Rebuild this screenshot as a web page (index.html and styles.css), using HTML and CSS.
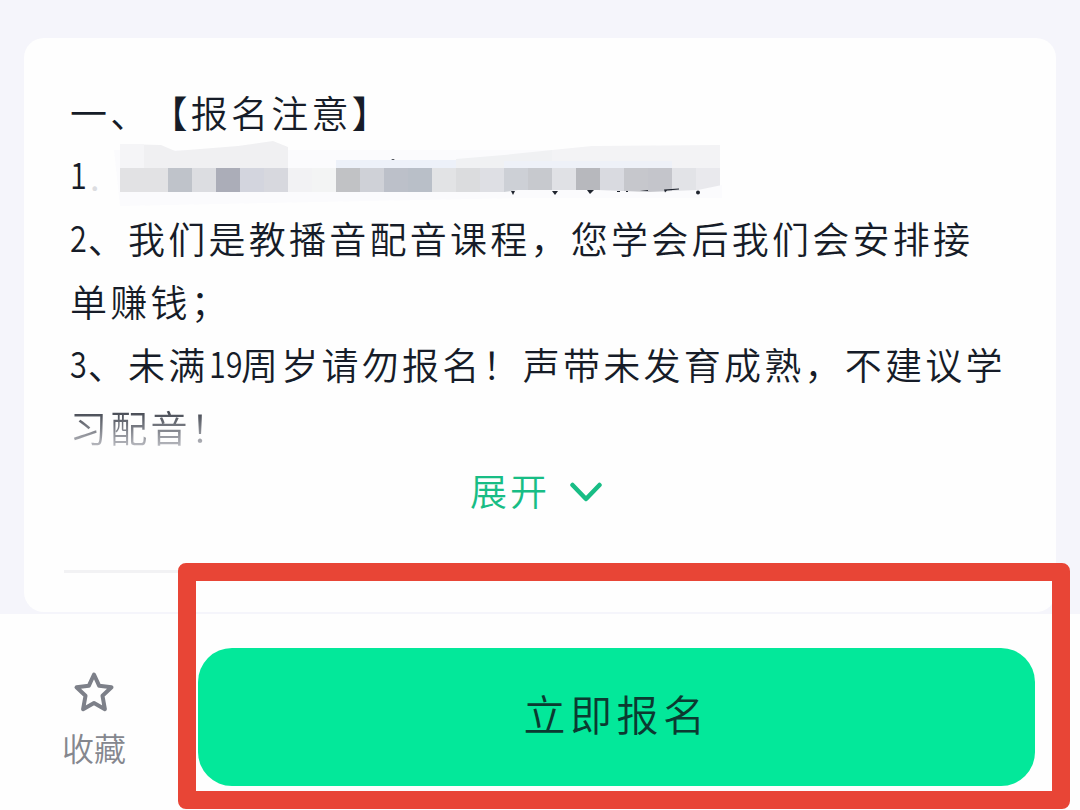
FILE: index.html
```html
<!DOCTYPE html>
<html lang="zh-CN">
<head>
  <meta charset="UTF-8" />
  <title>报名注意</title>
  <link rel="stylesheet" href="styles.css">
</head>
<body>
  <main class="page">
    <section class="card">
      <div class="notice">
        <p>一、【报名注意】</p>
        <p class="hidden-line"><span class="num">1</span><span class="faint">.</span>
          <!-- mosaic over the first item -->
          <svg class="mosaic" width="610" height="63" viewBox="114 144 610 63">
            <path fill="#fbfbfd" d="M114 150h606v44l-300 6-300 6z"/>
            <path fill="#f0f0f2" d="M120 144l41 1 14 6 63-5 35-5 15 6v21H120z"/>
            <path fill="#f5f5f7" d="M120 144h24v24h-24z"/>
            <path fill="#edf1f9" d="M336 160h168v8H336z"/>
            <path fill="#f0f1f3" d="M456 159l48-4 48-5v18h-96z"/>
            <path fill="#f3f3f5" d="M552 150l40-4 128-1v23H552z"/>
            <path fill="#eef1f8" d="M504 161h168v7H504z"/>
            <g id="tiles"></g>
            <path fill="#fbfbfd" d="M504 192l14-2 80 0 50 2 50-2 24-5v13H504z"/>
            <path fill="#20252f" d="M511 191h4l-2 4zM552 191h6l-3 4zM587 190h7l-4 4zM617 191h3v1h-3zM626 191h2v1h-2zM640 191l8-1v1zM664 189.500l15-1v1l-12 1-2 2z"/>
            <circle cx="698" cy="192.500" r="2" fill="#20252f"/>
            <path fill="#20252f" d="M391 160l2-1 2 1z"/>
          </svg>
        </p>
        <p><span class="num">2</span>、我们是教播音配音课程，您学会后我们会安排接</p>
        <p>单赚钱；</p>
        <p><span class="num">3</span>、未满<span class="num pair">19</span>周岁请勿报名！声带未发育成熟，不建议学</p>
        <p class="fade">习配音！</p>
      </div>
      <button class="expand">
        <span>展开</span>
        <svg width="32" height="20" viewBox="0 0 32 20">
          <path d="M2.500 3L16 17 29.500 3" />
        </svg>
      </button>
      <hr class="divider">
    </section>

    <footer class="bar">
      <button class="fav">
        <svg width="42" height="42" viewBox="0 0 42 42">
          <path d="M21 3.500l5.200 11.300 12.300 1.500-9 8.500 2.400 13.400L21 32.100 10.100 38.200l2.400-13.400-9-8.500 12.300-1.500z" />
        </svg>
        <span>收藏</span>
      </button>
      <button class="enroll"><span>立即报名</span></button>
    </footer>

    <div class="highlight"></div>
  </main>

  <script>
    const colors = [
      "#e2e2e4", "#e2e2e4", "#bfc3ca", "#dcdde1", "#abadb8", "#d3d5de", "#d7d8de",
      "#f2f2f4", "#f3f4f4", "#c1c2c5", "#cfd1d7", "#bcc0c9", "#b9bfc8", "#e2e3e5",
      "#dbdcde", "#dedfe4", "#cdd0d6", "#c7c9ce", "#e0e1e5", "#b7b8bd", "#d9dae0",
      "#c6c7cc", "#c4c5cb", "#e2e3e7", "#e9e9ed"
    ];
    document.getElementById("tiles").innerHTML = colors
      .map((c, i) => `<rect x="${120 + i * 24}" y="168" width="24" height="24" fill="${c}"/>`)
      .join("");
  </script>
</body>
</html>
```
FILE: styles.css
```css
* { box-sizing: border-box; margin: 0; padding: 0; }
body {
  background: #f5f5fb;
  font-family: "Noto Sans CJK SC", sans-serif;
  font-weight: 350;
  color: #161c28;
}
button {
  border: none;
  background: none;
  font: inherit;
  color: inherit;
  cursor: pointer;
}
.page {
  position: relative;
  width: 1080px; height: 810px;
  padding-top: 38px;
  display: flex; flex-direction: column;
  overflow: hidden;
}
.card {
  height: 574px;
  margin: 0 24px 2px;
  padding: 43px 40px 0 46px;
  border-radius: 20px;
  background: #fefefe;
}
.notice {
  font-size: 37px;
  line-height: 63px;
  letter-spacing: 3.250px;
  white-space: nowrap;
  text-spacing-trim: space-all;
}
.notice p { height: 63px; }
.num {
  display: inline-block;
  margin-right: -2px;
  font-size: 36px;
  letter-spacing: 0;
  transform: translateY(-2px) scaleX(0.85);
  transform-origin: left;
}
.pair { margin-right: -7px; }
.hidden-line { display: flex; }
.faint {
  width: 27px;
  padding-left: 2px;
  color: #dcdde1;
}
.mosaic {
  flex: none;
  margin-left: -1px;
  overflow: visible;
}
.fade {
  width: 200px;
  color: transparent;
  background: linear-gradient(#30353f 15%, #b9bac0 80%);
  -webkit-background-clip: text;
  background-clip: text;
}
.expand {
  display: flex; align-items: center;
  gap: 20px;
  margin: 5px 0 0 400px;
  height: 56px;
  font-size: 37px;
  letter-spacing: 3px;
  color: #18bd85;
}
.expand span { padding-bottom: 5px; }
.expand svg {
  fill: none; stroke: #18bd85; stroke-width: 4.500;
  stroke-linecap: round; stroke-linejoin: round;
}
.divider {
  height: 3px;
  margin: 50px 0 0 -6px;
  border: none;
  background: #f2f2f4;
}
.bar {
  flex: 1;
  display: flex;
  padding: 34px 45px 0 45px;
  background: #fefefe;
}
.fav {
  width: 98px;
  margin-right: 55px;
  padding-top: 23px;
  display: flex; flex-direction: column; align-items: center;
  font-size: 32px;
  line-height: 36px;
  color: #85878e;
}
.fav svg {
  margin-bottom: 16px;
  fill: none; stroke: #7d8089; stroke-width: 4;
  stroke-linejoin: round;
}
.enroll {
  width: 837px; height: 138px;
  padding-bottom: 10px;
  border-radius: 34px;
  background: #03e89a;
  font-size: 42px;
  letter-spacing: 4.500px;
  color: #0b3a31;
}
/* red frame drawn over the sign-up button */
.highlight {
  position: absolute;
  left: 178px; top: 563px;
  width: 892px; height: 246px;
  border: 18px solid #e84536;
  border-radius: 8px;
  pointer-events: none;
}
```
